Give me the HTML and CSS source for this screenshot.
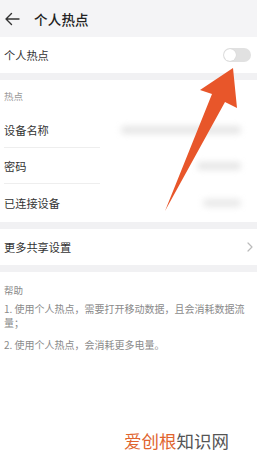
FILE: index.html
```html
<!DOCTYPE html>
<html lang="zh">
<head>
<meta charset="utf-8">
<link rel="stylesheet" href="styles.css">
</head>
<body>
<div class="page">
  <header class="topbar">
    <svg class="back" width="16" height="14" viewBox="0 0 16 14"><path d="M15 7H2M7.5 1.5L2 7l5.5 5.5" fill="none" stroke="#333" stroke-width="1.4" stroke-linecap="round" stroke-linejoin="round"/></svg>
    <span class="title">个人热点</span>
  </header>

  <div class="card">
    <div class="row">
      <span class="label">个人热点</span>
      <span class="toggle"><span class="knob"></span></span>
    </div>
  </div>

  <div class="gap"></div>

  <div class="card">
    <div class="section-title">热点</div>
    <div class="row split">
      <span class="label">设备名称</span>
      <span class="blur wide"></span>
    </div>
    <div class="row split">
      <span class="label">密码</span>
      <span class="blur short"></span>
    </div>
    <div class="row last">
      <span class="label">已连接设备</span>
      <span class="blur shorter"></span>
    </div>
  </div>

  <div class="gap"></div>

  <div class="card">
    <div class="row">
      <span class="label">更多共享设置</span>
      <svg class="chev" width="6" height="10" viewBox="0 0 6 10"><path d="M1 1l4 4-4 4" fill="none" stroke="#bbb" stroke-width="1.2" stroke-linecap="round" stroke-linejoin="round"/></svg>
    </div>
  </div>

  <div class="gap"></div>

  <div class="help">
    <div class="help-title">帮助</div>
    <p class="help-text">1. 使用个人热点，需要打开移动数据，且会消耗数据流量；</p>
    <p class="help-text">2. 使用个人热点，会消耗更多电量。</p>
  </div>

  <div class="watermark"><span class="wm-orange">爱创根</span><span class="wm-gray">知识网</span></div>

  <svg class="arrow" width="257" height="461" viewBox="0 0 257 461">
    <polygon points="233,68 237,108 225,102 165,211 212,94 200,90" fill="#e8562a"/>
  </svg>
</div>
</body>
</html>
```

FILE: styles.css
```css
* { box-sizing: border-box; }
html, body { margin: 0; padding: 0; }
body {
  background: #ffffff;
  font-family: "Noto Sans CJK SC", "Noto Sans", sans-serif;
  color: #333;
}
.page {
  position: relative;
  width: 257px;
  height: 461px;
  overflow: hidden;
  background: #ffffff;
  display: flex;
  flex-direction: column;
}
.topbar {
  height: 37px;
  background: #f4f4f6;
  display: flex;
  align-items: center;
  padding-left: 4px;
  gap: 14px;
}
.back { display: block; }
.title {
  font-size: 13.5px;
  font-weight: 500;
  color: #222;
  letter-spacing: 0.2px;
}
.card {
  background: #fff;
  padding: 0 6px 0 4px;
}
.row {
  height: 36px;
  display: flex;
  align-items: center;
  justify-content: space-between;
  position: relative;
}
.row.split::after {
  content: "";
  position: absolute;
  left: 0;
  bottom: 0;
  width: 96px;
  height: 1px;
  background: #eeeeee;
}
.row.last { height: 38px; }
.label {
  font-size: 11.2px;
  color: #333;
}
.toggle {
  width: 28px;
  height: 14px;
  border-radius: 7px;
  background: #e1e1e1;
  position: relative;
  display: flex;
  align-items: center;
  padding-left: 1px;
}
.knob {
  width: 12px;
  height: 12px;
  border-radius: 50%;
  background: #fff;
  box-shadow: 0 0 1px rgba(0,0,0,0.15);
}
.gap {
  height: 7px;
  background: #f1f1f3;
}
.section-title {
  height: 32px;
  display: flex;
  align-items: center;
  font-size: 9.5px;
  color: #999;
}
.blur {
  height: 8px;
  border-radius: 4px;
  background: #e6e6e6;
  filter: blur(3px);
  margin-right: 10px;
}
.blur.wide { width: 120px; }
.blur.short { width: 44px; }
.blur.shorter { width: 38px; background: #e9e9e9; }
.chev { display: block; margin-right: -2px; }
.help {
  flex: 1;
  background: #fff;
  padding: 10px 8px 0 4px;
}
.help-title {
  font-size: 9.5px;
  color: #888;
  line-height: 16px;
  margin-bottom: 4px;
}
.help-text {
  margin: 0 0 8px 0;
  font-size: 10px;
  line-height: 14px;
  color: #8a8a8a;
}
.watermark {
  position: absolute;
  left: 124px;
  top: 430px;
  font-size: 17.5px;
  line-height: 22px;
  white-space: nowrap;
}
.wm-orange { color: #e0642e; }
.wm-gray { color: #555; }
.arrow {
  position: absolute;
  left: 0;
  top: 0;
  pointer-events: none;
}
```
